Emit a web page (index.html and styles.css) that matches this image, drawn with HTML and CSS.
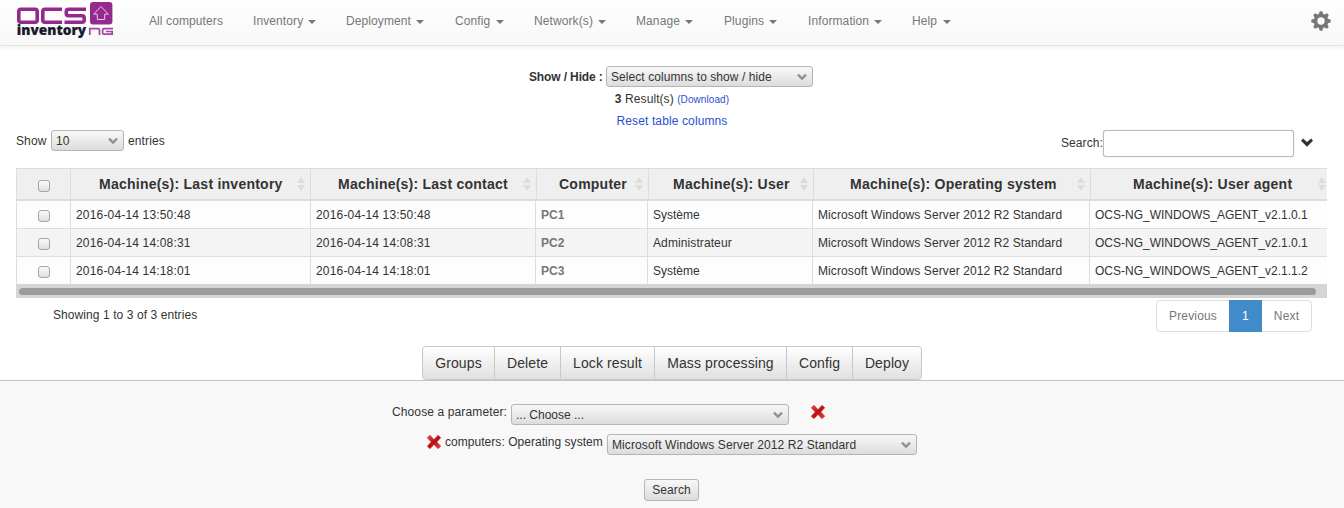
FILE: index.html
```html
<!DOCTYPE html>
<html lang="en">
<head>
<meta charset="utf-8">
<title>OCS Inventory</title>
<link rel="stylesheet" href="styles.css">
</head>
<body>
<svg class="defs" width="0" height="0" aria-hidden="true">
  <defs>
    <linearGradient id="red" x1="0" y1="0" x2="1" y2="1"><stop offset="0" stop-color="#f04a4a"/><stop offset=".5" stop-color="#b80f0f"/><stop offset="1" stop-color="#ee4545"/></linearGradient>
    <symbol id="chev" viewBox="0 0 10 8"><path d="M1 1.6 5 5.6 9 1.6" fill="none" stroke="#8d8f8c" stroke-width="2.2"/></symbol>
    <symbol id="cross" viewBox="0 0 16 16"><path d="M4 1.2 8 5.6 12 1.2 14.8 3.8 10.8 8 14.8 12.2 12 14.8 8 10.6 4 14.8 1.2 12.2 5.2 8 1.2 3.8Z" fill="url(#red)" stroke="#c42020" stroke-width=".5"/></symbol>
    <symbol id="sort" viewBox="0 0 8 14"><path d="M0 6 4 0 8 6ZM0 8H8L4 14Z" fill="#dcdcdc"/></symbol>
  </defs>
</svg>
<header class="navbar">
  <svg class="logo" width="98" height="40" viewBox="0 0 98 40">
    <g fill="none" stroke="#942a8d" stroke-width="3.6">
      <rect x="2.8" y="9.2" width="18.4" height="13" rx="2.2"/>
      <path d="M46 9.2H29Q26.8 9.2 26.8 11.4V20Q26.8 22.2 29 22.2H46"/>
      <path d="M70 9.2H52.5Q50.3 9.2 50.3 11.4V13.5Q50.3 15.7 52.5 15.7H66Q68.2 15.7 68.2 17.9V20Q68.2 22.2 66 22.2H48.5"/>
    </g>
    <rect x="74" y="2" width="22.4" height="22.6" rx="3" fill="#942a8d"/>
    <path d="M85 6.5 92.3 14.2H88.7V19.5H81.3V14.2H77.7Z" fill="none" stroke="#e6c6e4" stroke-width="1"/>
    <text class="logo-text" x="0.8" y="35.2" textLength="69.4" lengthAdjust="spacingAndGlyphs">inventory</text>
    <g fill="none" stroke="#a344a0" stroke-width="1.7"><path d="M73.8 35V28.7H82.3Q83.5 28.7 83.5 30V35"/><path d="M97 28.7H88Q86.6 28.7 86.6 30V33Q86.6 34.2 88 34.2H96.2V31.5H90"/></g>
  </svg>
  <nav class="menu">
    <a class="n1">All computers</a>
    <a class="n2">Inventory<i class="caret"></i></a>
    <a class="n3">Deployment<i class="caret"></i></a>
    <a class="n4">Config<i class="caret"></i></a>
    <a class="n5">Network(s)<i class="caret"></i></a>
    <a class="n6">Manage<i class="caret"></i></a>
    <a class="n7">Plugins<i class="caret"></i></a>
    <a class="n8">Information<i class="caret"></i></a>
    <a class="n9">Help<i class="caret"></i></a>
  </nav>
  <svg class="gear" width="20" height="20" viewBox="0 0 20 20"><g fill="#777"><circle cx="10" cy="10" r="7.2"/><g id="teeth"><path d="M7.6 3.5 8.8.3H11.2L12.4 3.5V16.5L11.2 19.7H8.8L7.6 16.5Z"/><path d="M3.5 7.6.3 8.8V11.2L3.5 12.4H16.5L19.7 11.2V8.8L16.5 7.6Z"/></g><use href="#teeth" transform="rotate(45 10 10)"/></g><circle cx="10" cy="10" r="3.7" fill="#fafafa"/></svg>
</header>
<main>
  <section class="columns">
    <div class="showhide"><b>Show / Hide :</b><span class="select s-cols"><span>Select columns to show / hide</span><svg width="10" height="8"><use href="#chev"/></svg></span></div>
    <div class="results"><b>3</b> <span>Result(s)</span> <a class="download">(Download)</a></div>
    <a class="reset">Reset table columns</a>
  </section>
  <section class="tools">
    <label class="length"><span>Show</span><span class="select s-len"><span>10</span><svg width="10" height="8"><use href="#chev"/></svg></span><span>entries</span></label>
    <label class="filter"><span>Search:</span><input type="text"><svg width="12" height="9" viewBox="0 0 12 9"><path d="M2 0.4 6 3.9 10 .4 12 2.8 6 8.8 0 2.8Z" fill="#333"/></svg></label>
  </section>
  <section class="grid">
    <div class="row head">
      <div class="check"><i class="box"></i></div>
      <div class="h1"><span>Machine(s): Last inventory</span><svg width="8" height="14"><use href="#sort"/></svg></div>
      <div class="h2"><span>Machine(s): Last contact</span><svg width="8" height="14"><use href="#sort"/></svg></div>
      <div class="h3"><span>Computer</span><svg width="8" height="14"><use href="#sort"/></svg></div>
      <div class="h4"><span>Machine(s): User</span><svg width="8" height="14"><use href="#sort"/></svg></div>
      <div class="h5"><span>Machine(s): Operating system</span><svg width="8" height="14"><use href="#sort"/></svg></div>
      <div class="h6"><span>Machine(s): User agent</span><svg width="8" height="14"><use href="#sort"/></svg></div>
    </div>
    <div class="row"><div class="check"><i class="box"></i></div><div class="date">2016-04-14 13:50:48</div><div class="date">2016-04-14 13:50:48</div><div class="pc">PC1</div><div>Système</div><div class="os">Microsoft Windows Server 2012 R2 Standard</div><div class="agent">OCS-NG_WINDOWS_AGENT_v2.1.0.1</div></div>
    <div class="row even"><div class="check"><i class="box"></i></div><div class="date">2016-04-14 14:08:31</div><div class="date">2016-04-14 14:08:31</div><div class="pc">PC2</div><div class="os">Administrateur</div><div class="os">Microsoft Windows Server 2012 R2 Standard</div><div class="agent">OCS-NG_WINDOWS_AGENT_v2.1.0.1</div></div>
    <div class="row last"><div class="check"><i class="box"></i></div><div class="date">2016-04-14 14:18:01</div><div class="date">2016-04-14 14:18:01</div><div class="pc">PC3</div><div>Système</div><div class="os">Microsoft Windows Server 2012 R2 Standard</div><div class="agent">OCS-NG_WINDOWS_AGENT_v2.1.1.2</div></div>
    <div class="scroll"><i></i></div>
  </section>
  <section class="foot">
    <span class="info">Showing 1 to 3 of 3 entries</span>
    <div class="pager"><a class="prev">Previous</a><a class="current">1</a><a class="next">Next</a></div>
  </section>
  <div class="actions"><a class="a1">Groups</a><a class="a2">Delete</a><a class="a3">Lock result</a><a class="a4">Mass processing</a><a class="a5">Config</a><a class="a6">Deploy</a></div>
</main>
<section class="criteria">
  <div class="param"><span class="label">Choose a parameter:</span><span class="select s-par"><span>... Choose ...</span><svg width="10" height="8"><use href="#chev"/></svg></span><svg class="x" width="16" height="16"><use href="#cross"/></svg></div>
  <div class="param second"><svg class="x" width="16" height="16"><use href="#cross"/></svg><span class="label">computers: Operating system</span><span class="select s-os"><span class="os">Microsoft Windows Server 2012 R2 Standard</span><svg width="10" height="8"><use href="#chev"/></svg></span></div>
  <a class="go">Search</a>
</section>
</body>
</html>
```
FILE: styles.css
```css
* { box-sizing: border-box; }
body { margin: 0; width: 1344px; height: 508px; overflow: hidden; background: #fff; color: #333; font: 12px/18px "Liberation Sans", Arial, sans-serif; white-space: nowrap; display: flex; flex-direction: column; }
.defs { position: absolute; }
.navbar { height: 46px; flex: none; display: flex; align-items: flex-start; background: linear-gradient(#fff, #f7f7f7); border-bottom: 1px solid #e3e3e3; box-shadow: 0 1px 6px rgba(0,0,0,.08); color: #777; }
.logo { margin-left: 16px; flex: none; }
.logo-text { font: 800 14px "Open Sans", sans-serif; fill: #171a2e; stroke: #171a2e; stroke-width: .2; }
.menu { display: flex; margin-left: 35px; padding-top: 12px; letter-spacing: .1px; }
.menu a { display: flex; align-items: center; }
.caret { border: 4px solid transparent; border-top-color: #777; border-bottom: 0; margin-left: 5px; margin-top: 2px; }
.n1 { width: 104px; } .n2 { width: 93px; } .n3 { width: 109px; } .n4 { width: 79px; } .n5 { width: 102px; } .n6 { width: 88px; } .n7 { width: 84px; } .n8 { width: 104px; }
.n4 .caret, .n9 .caret { margin-left: 6px; }
.gear { margin: 11px 13px 0 auto; }
main { height: 334px; flex: none; display: flex; flex-direction: column; }
.columns { height: 84px; padding-top: 20px; display: flex; flex-direction: column; align-items: center; }
.showhide { display: flex; align-items: center; gap: 4px; margin-left: -2px; height: 22px; }
.showhide b { width: 73px; letter-spacing: -.13px; }
.select { display: flex; align-items: center; justify-content: space-between; height: 21px; border: 1px solid #b5b5b5; border-radius: 3px; background: linear-gradient(#f8f8f8, #dcdcdc); padding: 0 5px 0 4px; }
.s-cols { width: 207px; letter-spacing: .07px; } .s-len { width: 73px; } .s-par { width: 278px; } .s-os { width: 310px; }
.results { height: 22px; line-height: 24px; letter-spacing: .08px; }
.download { font-size: 10px; }
.columns a { color: #2a4fd0; }
.reset { line-height: 24px; letter-spacing: .12px; }
.tools { height: 38px; display: flex; justify-content: space-between; padding: 0 32px 0 16px; }
.length { display: flex; align-items: center; height: 21px; gap: 4px; letter-spacing: .12px; }
.length > span:first-child { width: 31px; }
.filter { display: flex; align-items: center; height: 26px; letter-spacing: .1px; margin-right: -1px; }
.filter input { width: 191px; height: 27px; border: 1px solid #bbb; border-radius: 3px; box-shadow: 0 0 1px #aaa; margin-right: 7px; }
.filter svg { margin-bottom: 2px; }
.grid { width: 1311px; height: 130px; margin-left: 16px; overflow: hidden; }
.row { display: grid; grid-template-columns: 55px 240px 225px 112px 165px 277px 240px; height: 28px; background: #fdfdfd; border-bottom: 1px solid #ddd; }
.row > div { border-right: 1px solid #ddd; padding-left: 5px; line-height: 29px; height: 27px; }
.row > .check { border-left: 1px solid #ddd; padding: 0; display: flex; align-items: flex-start; justify-content: center; }
.box { width: 12px; height: 12px; border: 1px solid #a5a5a5; border-radius: 3px; background: linear-gradient(#fafafa, #dedede); margin-top: 9px; }
.date { letter-spacing: .17px; }
.os { letter-spacing: .1px; }
.row.even { background: #f4f4f4; }
.row.head { grid-template-columns: 55px 240px 226px 112px 165px 277px 241px; height: 33px; background: #efefef; border-top: 1px solid #ddd; border-bottom-width: 2px; font-weight: bold; font-size: 14px; letter-spacing: .24px; }
.row.head > div { height: 30px; }
.head .box { margin-top: 11px; }
.head > div:not(.check) { display: flex; align-items: center; justify-content: space-between; padding-right: 5px; }
.head > .h1 { padding-left: 28px; } .head > .h2 { padding-left: 27px; } .head > .h3 { padding-left: 22px; } .head > .h4 { padding-left: 24px; } .head > .h5 { padding-left: 36px; } .head > .h6 { padding-left: 42px; }
.head > .h3, .head > .h6 { padding-right: 6px; }
.head > .h6 { padding-right: 4px; }
.pc { font-weight: bold; color: #777; }
.row.last { border-bottom: 0; height: 27px; }
.scroll { height: 14px; background: #d5d5d5; padding: 4px 11px 0 3px; }
.scroll i { display: block; height: 7px; border-radius: 4px; background: #9a9b9d; }
.foot { height: 48px; display: flex; justify-content: space-between; padding: 2px 32px 0 53px; }
.info { padding-top: 6px; letter-spacing: .08px; }
.pager { height: 32px; display: flex; border: 1px solid #ddd; border-radius: 4px; color: #777; letter-spacing: .15px; }
.pager a { line-height: 30px; text-align: center; }
.prev { width: 72px; } .next { width: 49px; }
.pager .current { width: 33px; background: #428bca; color: #fff; margin: -1px 0; line-height: 32px; }
.actions { display: flex; align-self: center; height: 34px; border: 1px solid #c8c8c8; border-radius: 4px; background: linear-gradient(#fff, #e0e0e0); font-size: 14px; line-height: 32px; text-align: center; letter-spacing: .1px; }
.actions a + a { border-left: 1px solid #c8c8c8; }
.a1 { width: 71px; } .a2 { width: 66px; } .a3 { width: 94px; } .a4 { width: 132px; } .a5 { width: 66px; } .a6 { width: 69px; }
.criteria { flex: 1; border-top: 1px solid #c3c3c3; background: #f8f8f8; display: flex; flex-direction: column; }
.param { display: flex; height: 21px; margin: 23px 0 0 392px; gap: 4px; }
.label { line-height: 16px; width: 115px; letter-spacing: .12px; }
.param .x { margin-left: 17px; }
.param.second { margin: 9px 0 0 426px; gap: 3px; }
.second .label { width: 159px; letter-spacing: .04px; }
.second .x { margin: 0; }
.go { align-self: center; margin: 24px 1px 0 0; width: 55px; height: 22px; line-height: 20px; text-align: center; border: 1px solid #b5b5b5; border-radius: 3px; background: linear-gradient(#f8f8f8, #dcdcdc); letter-spacing: .1px; }
```
